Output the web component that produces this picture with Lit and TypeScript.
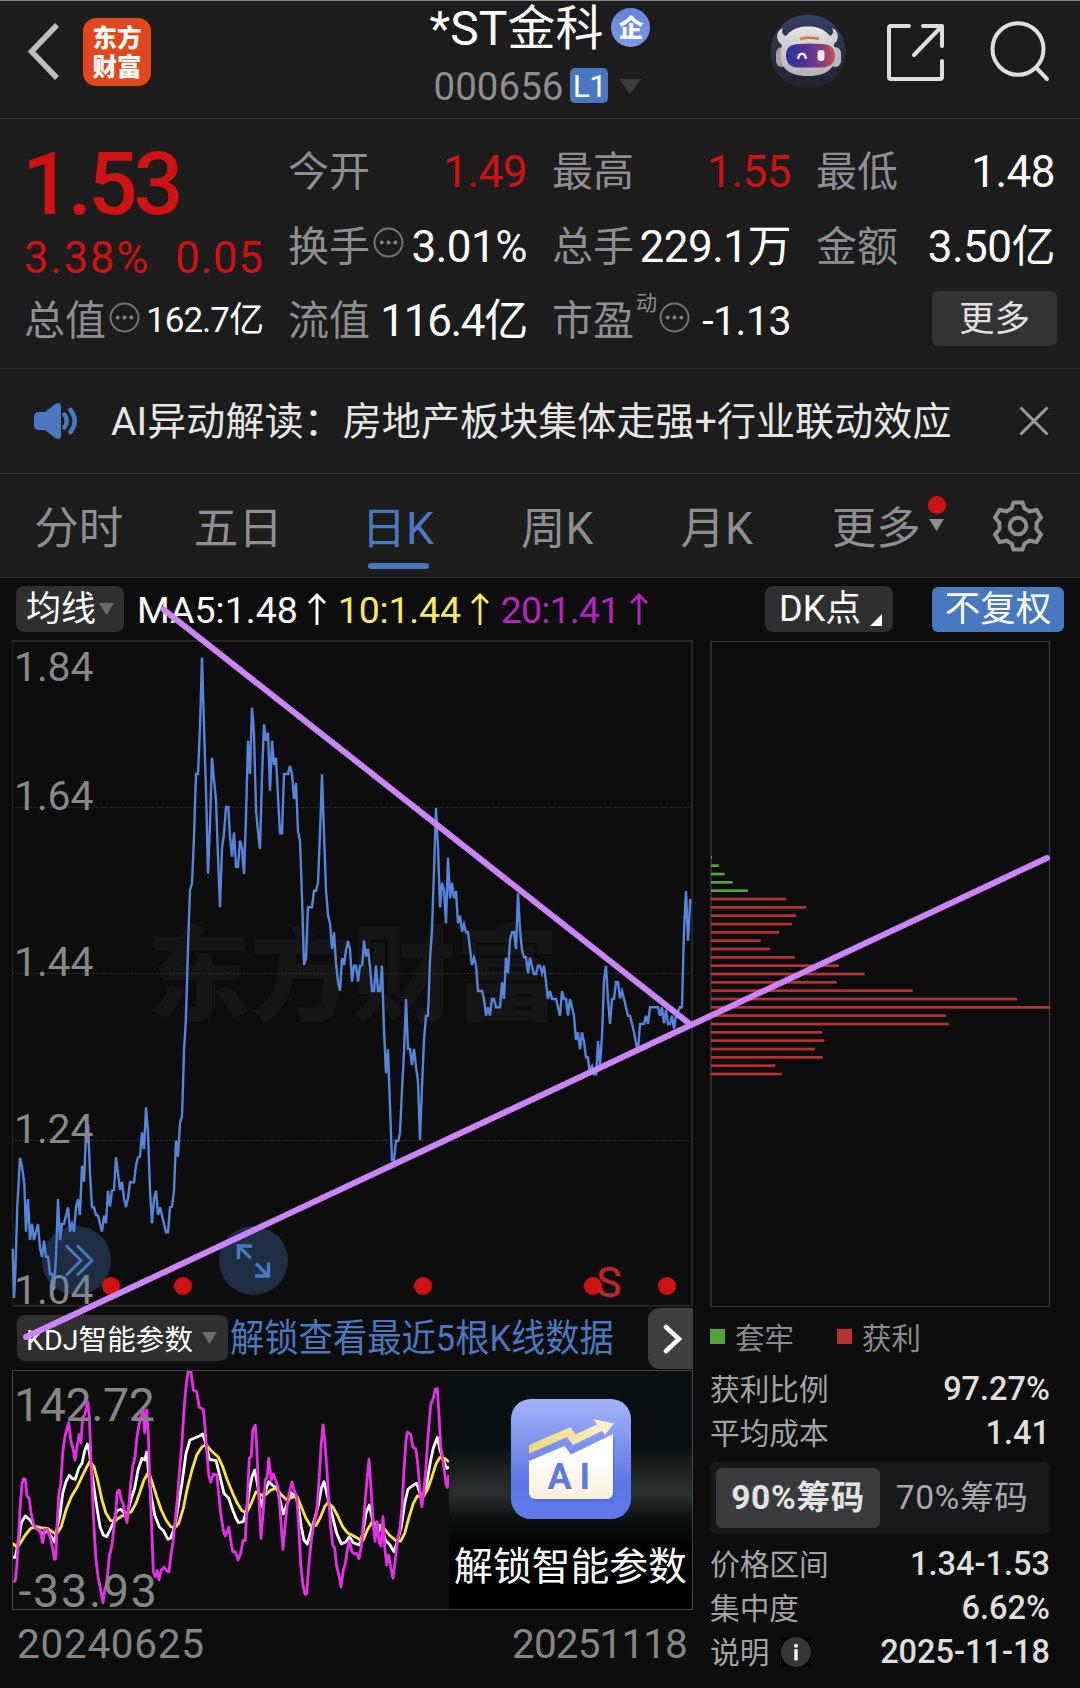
import { LitElement, html, svg, css } from "lit";
import { customElement } from "lit/decorators.js";

type Pt = [number, number];

/** Reads "x,y x,y ..." in thirds of a pixel, shifted by (ox, oy), into pixel points. */
const trace = (ox: number, oy: number, raw: string): Pt[] =>
  raw
    .trim()
    .split(/\s+/)
    .map((p) => p.split(",").map(Number))
    .map(([x, y]) => [(x + ox) / 3, (y + oy) / 3] as Pt);

const toPoints = (pts: Pt[]) => pts.map(([x, y]) => `${x.toFixed(1)},${y.toFixed(1)}`).join(" ");

/* Main chart, origin at page y = 641 */
const PRICE = toPoints([
  ...trace(0, 1017, `38,806 42,955 46,880 52,680 60,533 66,560 73,610 78,755 84,657 90,780 96,732 102,780 108,755 114,732
    120,805 126,830 132,782 138,830 144,830 150,882 157,882 162,930 168,830 174,657 180,780 186,732 192,732 204,682
    210,755 216,732 222,755 228,682 234,657 240,705 246,557 252,605 258,460 264,432 270,580 276,682 282,682 288,705
    294,707 306,755 312,707 318,730 324,632 330,680 336,632 342,630 348,532 354,580 360,630 366,607 372,655 378,682
    384,655 390,607 402,607 408,557 414,532 420,530 426,457 432,507 438,382 444,457 450,632 456,730 462,657 468,632
    474,705 480,682 498,757 504,757 510,682 516,680 522,632 528,482 534,530 540,430 546,408 549,320 552,210 557,130`),
  ...trace(0, -33, `561,1060 564,950 570,780 576,760 582,620 588,432 594,432 600,290 606,83 612,290 618,480 624,732
    630,580 636,383 642,450 648,510 654,680 660,832 666,655 672,610 678,531 685,531 690,620 696,680 702,607 708,710
    714,710 720,632 726,655 732,732 738,560 744,332 750,432 756,233 762,310 768,540 774,605 780,657 786,440 792,283
    798,332 804,308 810,482 816,332 822,405 828,383 834,500 840,610 846,610 852,432 864,432 870,408 876,432 882,507
    888,458 894,605 900,632 906,800 912,1005 918,985 924,832 936,832 942,782 948,782 954,758 960,610 966,433 972,610
    978,780 984,855 990,880 996,957 1002,907 1008,1000 1014,1055 1020,1082 1026,985 1032,1005 1038,960 1044,933`),
  ...trace(1050, -33, `0,957 6,1055 12,1007 18,1007 24,1055 30,1007 37,1005 42,932 48,980 54,957 60,1010 66,1083
    72,1083 78,1007 84,1083 90,1083 96,1007 102,1200 108,1330 114,1258 120,1430 126,1590 132,1590 138,1532 145,1532
    150,1508 156,1380 162,1270 168,1107 174,1257 180,1257 186,1305 192,1257 198,1310 204,1355 210,1530 216,1370
    222,1230 228,1157 234,1157 240,990 246,900 252,720 258,533 264,650 270,832 276,758 282,780 288,880 294,683
    300,805 306,758 312,805 318,783 324,880 330,857 336,905 342,883 348,907 354,907 360,957 366,1005 372,983
    378,1005 384,1083 396,1083 402,1107 408,1157 414,1132 420,1157 426,1107 432,1107 438,1132 450,1132 456,1057
    462,1107 468,983 474,1030 480,930 486,907 492,907 498,957 504,790 510,900 516,960 522,982 528,982 534,1030
    540,983 546,1010 552,1032 558,1032 564,1007 570,1007 576,1030 582,1007 588,1057 594,1107 600,1083 606,1107
    618,1107 624,1132 630,1157 636,1083 642,1107 648,1107 654,1157 660,1107 666,1132 672,1157 678,1230 684,1207
    690,1257 696,1207 702,1235 708,1282 714,1282 718,1320 726,1308 732,1333 739,1333 744,1233 750,1305 756,1220
    762,1050 768,1007 774,1107 780,1182 786,1107 792,1107 798,1057 804,1057 810,1105 816,1083 822,1107 834,1157
    840,1157 852,1207 860,1250 865,1250 870,1182 882,1182 888,1157 894,1182 900,1132 924,1132 930,1157 936,1132
    942,1180 948,1140 954,1182 960,1182 966,1157 972,1197 978,1157 990,1132 996,1132 1002,900 1008,783 1014,932
    1021,807`),
]);

/* KDJ chart, origin at page y = 1370 */
const kdj = (raw: string) => toPoints(trace(0, -30, raw));
const KDJ_J = kdj(`38,665 46,662 50,620 55,540 60,450 66,372 70,357 76,358 81,408 88,416 93,460 100,490 108,506 120,510
  128,548 134,508 142,508 150,530 158,565 163,598 167,596 171,500 177,395 182,375 188,280 195,228 200,210 206,188
  212,240 220,270 225,300 231,262 237,224 243,248 248,170 254,165 258,150 263,125 268,170 273,300 278,420 283,520
  288,600 295,655 302,690 309,728 314,690 320,670 328,590 335,560 340,520 346,470 352,395 358,390 363,418 369,430
  375,462 381,488 386,440 392,370 398,320 405,290 411,230 418,190 424,165 430,150 434,218 440,150 445,220 450,380
  455,500 460,635 466,650 472,632 477,660 484,630 492,622 500,632 507,636 512,590 520,540 526,480 532,420 538,340
  545,260 552,150 558,80 564,36 573,34 580,90 590,95 598,142 610,148 615,200 620,270 626,345 632,367 640,342 650,345
  656,400 662,460 670,510 676,528 686,502 692,540 698,575 706,575 714,600 722,580 729,542 736,542 742,420 748,295
  754,290 758,210 766,196 770,260 776,400 783,535 790,450 796,360 802,350 806,295 814,360 820,342 826,358 834,380
  841,460 849,568 856,490 864,415 870,390 876,366 882,390 890,410 896,500 902,610 908,670 915,703 920,702 926,620
  934,540 942,490 950,460 958,350 964,250 969,195 974,240 980,320 986,420 992,500 998,555 1004,565 1010,620 1018,650
  1023,680 1030,630 1036,612 1042,570 1048,542 1056,575 1064,582 1070,580 1077,596 1084,560 1090,490 1096,420
  1102,350 1107,298 1112,370 1118,470 1125,543 1131,485 1137,545 1143,558 1149,470 1154,560 1160,615 1166,585
  1172,620 1179,655 1186,600 1192,545 1200,505 1206,440 1212,330 1218,240 1222,216 1232,224 1238,260 1248,268
  1254,320 1260,390 1265,440 1272,390 1278,320 1285,220 1292,135 1300,115 1306,88 1312,86 1316,150 1322,260
  1330,310 1338,370 1342,382 1346,345`);
const KDJ_K = kdj(`38,592 46,592 56,540 64,488 76,468 90,480 104,500 116,510 128,522 142,510 152,528 164,546 172,500
  180,465 188,400 198,365 208,346 216,355 226,358 236,325 246,310 254,272 262,252 268,275 276,340 284,400 292,450
  300,500 310,525 320,530 330,510 342,485 350,452 362,448 372,458 382,462 392,420 404,385 414,330 426,295 434,300
  440,276 446,340 454,410 464,465 478,500 490,512 504,538 512,534 524,500 534,440 546,370 558,280 570,240 582,235
  598,228 608,222 616,245 628,298 648,302 660,350 672,400 686,415 698,450 708,475 716,488 730,485 740,450 748,390
  756,350 764,330 772,370 780,420 786,440 792,405 806,365 820,378 832,385 842,430 850,462 860,435 874,398 888,410
  896,445 904,500 912,540 922,552 934,510 946,470 956,430 964,385 972,365 980,400 990,440 1000,480 1010,520
  1024,552 1038,545 1048,530 1060,548 1078,555 1088,520 1098,460 1108,435 1118,480 1130,520 1145,500 1156,540
  1170,555 1182,575 1192,545 1204,500 1214,430 1224,388 1236,378 1250,370 1260,400 1270,405 1280,370 1292,300
  1300,265 1312,232 1320,270 1330,300 1340,325 1347,322`);
const KDJ_D = kdj(`38,550 52,562 64,545 76,525 92,505 110,500 128,504 144,506 156,515 170,522 184,500 198,450 214,410
  232,380 246,350 258,325 270,303 282,320 294,365 306,420 318,460 332,482 346,482 362,470 380,462 394,455 408,430
  420,395 432,360 446,336 456,365 470,410 484,450 498,480 512,500 524,503 536,490 550,445 562,385 576,330 590,285
  606,260 618,254 634,272 654,290 668,320 682,360 698,400 712,430 726,452 740,458 754,430 768,395 782,405 796,405
  812,390 828,385 842,402 858,418 876,412 892,410 904,440 918,475 932,498 948,496 960,475 974,440 984,428 998,440
  1012,465 1028,500 1042,518 1060,527 1078,538 1090,540 1102,510 1116,487 1130,492 1150,502 1168,525 1188,542
  1202,543 1214,520 1226,475 1240,430 1252,408 1270,410 1284,385 1296,350 1308,312 1320,292 1334,295 1347,306`);

/* Chip distribution: bar lengths in px, the first LOSS_BARS are held at a loss */
const CHIPS = [
  1, 7.7, 13.7, 21.7, 37, 75.3, 95, 85, 81, 68, 49.7, 59, 83.7, 127.7, 153.7, 125.7, 201.7, 306, 339, 235, 237.7, 111,
  113.3, 103.7, 111.7, 64.3, 70.7,
];
const LOSS_BARS = 5;

const base = css`
  :host {
    display: block;
    font-family: Roboto, "Noto Sans CJK SC", sans-serif;
    white-space: nowrap;
  }
  * {
    box-sizing: border-box;
  }
  svg {
    display: block;
    flex: none;
  }
`;

const hint = html`<svg class="hint" width="31" height="31" viewBox="0 0 31 31">
  <circle cx="15.5" cy="15.5" r="14" fill="none" stroke="#737373" stroke-width="2"></circle>
  <g fill="#858585"><circle cx="8.7" cy="15.5" r="1.9"></circle><circle cx="15.5" cy="15.5" r="1.9"></circle><circle cx="22.3" cy="15.5" r="1.9"></circle></g>
</svg>`;

const caret = (color: string) =>
  html`<svg class="caret" width="15" height="12" viewBox="0 0 15 12"><path d="M0 0H15L7.5 12Z" fill=${color}></path></svg>`;

@customElement("stock-header")
class StockHeader extends LitElement {
  static styles = [
    base,
    css`
      .bar {
        display: grid;
        grid-template-columns: 330px 420px 330px;
        height: 119px;
        border-top: 1px solid #858585;
        border-bottom: 1px solid #343434;
        background: #1c1c1c;
      }
      .left {
        display: flex;
        align-items: flex-start;
        gap: 24px;
        padding: 17px 0 0 27px;
      }
      .back {
        margin-top: 5px;
      }
      .logo {
        width: 68px;
        height: 68px;
        border-radius: 13px;
        background: #e2461c;
        color: #fff;
        font: 900 24.5px/29px "Noto Sans CJK SC", sans-serif;
        text-align: center;
        padding-top: 4px;
      }
      .mid {
        display: flex;
        flex-direction: column;
        align-items: center;
      }
      .name {
        display: flex;
        align-items: center;
        gap: 8px;
        height: 55px;
        color: #fff;
        font-size: 48px;
        line-height: 55px;
      }
      .ent {
        width: 39px;
        height: 39px;
        margin-top: -2px;
        border-radius: 50%;
        background: linear-gradient(#6383de, #7c9ae8);
        font: 900 25px/37px "Noto Sans CJK SC", sans-serif;
        text-align: center;
      }
      .code {
        display: flex;
        align-items: center;
        height: 60px;
        margin-left: -5px;
        color: #8e8d92;
        font-size: 38.5px;
      }
      .lv {
        width: 38px;
        height: 35px;
        margin: -1px 11px 0 7px;
        border-radius: 5px;
        background: #4878bf;
        color: #fff;
        font-size: 32px;
        line-height: 36px;
        text-align: center;
        letter-spacing: -1px;
      }
      .right {
        display: flex;
        align-items: flex-start;
        padding: 13px 0 0 20px;
      }
      .share {
        margin: 8px 0 0 40px;
      }
      .search {
        margin: 6px 0 0 43px;
      }
    `,
  ];
  render() {
    return html`<div class="bar">
      <div class="left">
        <svg class="back" width="32" height="58" viewBox="0 0 32 58"><path d="M30 2L4.500 28.500L30 55" fill="none" stroke="#bdbdbd" stroke-width="5.500"></path></svg>
        <div class="logo"><div>东方</div><div>财富</div></div>
      </div>
      <div class="mid">
        <div class="name"><span>*ST金科</span><span class="ent">企</span></div>
        <div class="code"><span>000656</span><span class="lv">L1</span>
          <svg width="22" height="15" viewBox="0 0 22 15"><path d="M0 0H22L11 15Z" fill="#3b3b3b"></path></svg>
        </div>
      </div>
      <div class="right">
        <svg width="76" height="76" viewBox="0 0 76 76">
          <defs>
            <linearGradient id="sky" x2="0" y2="1"><stop offset="0" stop-color="#33405f"></stop><stop offset="1" stop-color="#1e2028"></stop></linearGradient>
            <linearGradient id="visor"><stop offset="0" stop-color="#28309c"></stop><stop offset=".45" stop-color="#5a3494"></stop><stop offset=".8" stop-color="#94406e"></stop><stop offset="1" stop-color="#c25a50"></stop></linearGradient>
            <linearGradient id="shell" x2="0" y2="1"><stop offset="0" stop-color="#e6e4e6"></stop><stop offset="1" stop-color="#b3b0b7"></stop></linearGradient>
          </defs>
          <circle cx="38" cy="38" r="37.500" fill="url(#sky)"></circle>
          <path d="M13 14C5 17 5 28 14 32L23 21C15 24 10 20 13 14ZM62 14C70 17 70 28 61 32L53 21C61 24 65 20 62 14Z" fill="#d0cfd5"></path>
          <rect x="6" y="33" width="12" height="20" rx="6" fill="#a19fa8"></rect>
          <rect x="59" y="33" width="12" height="20" rx="6" fill="#bcbac0"></rect>
          <path d="M38 12.500C54 12.500 62 20 65 36C67 52 60 62 38 62C16 62 9 52 11 36C14 20 22 12.500 38 12.500Z" fill="url(#shell)"></path>
          <path d="M30 25Q39 22.500 49 25" fill="none" stroke="#c9823f" stroke-width="2.600"></path>
          <path d="M29 30Q39 29 52 30C61 30 65 34 65 42C65 50 60 53 52 53.500H28C20 53 16 49 16 41C16 34 20 30.500 29 30Z" fill="url(#visor)"></path>
          <path d="M28 45C29 38 35 38 36 45" fill="none" stroke="#efe9ff" stroke-width="2.400"></path>
          <rect x="47.500" y="36" width="7" height="11" rx="3" fill="#efe9f6"></rect>
        </svg>
        <svg class="share" width="59" height="60" viewBox="0 0 59 60" fill="none" stroke="#dedede" stroke-width="4" stroke-linecap="round" stroke-linejoin="round">
          <path d="M23 4H5Q3 4 3 6V55Q3 57 5 57H54Q56 57 56 55V39M37 4H56V24M55 5L28 33"></path>
        </svg>
        <svg class="search" width="62" height="64" viewBox="0 0 62 64" fill="none" stroke="#dedede" stroke-width="4" stroke-linecap="round">
          <ellipse cx="30" cy="29" rx="25.500" ry="25.800"></ellipse><path d="M48.500 48L59 59"></path>
        </svg>
      </div>
    </div>`;
  }
}

@customElement("stock-quote")
class StockQuote extends LitElement {
  static styles = [
    base,
    css`
      .grid {
        display: grid;
        grid-template-columns: repeat(4, 237px);
        grid-template-rows: 75px 75px 74px;
        column-gap: 27px;
        height: 250px;
        padding: 15px 0 0 26px;
        border-bottom: 1px solid #2b2b2b;
        background: #1c1c1c;
      }
      .lead {
        grid-row: span 2;
        color: #cf1111;
      }
      .price {
        height: 101px;
        margin-left: -4px;
        font-size: 87.5px;
        line-height: 101px;
        font-weight: 500;
        letter-spacing: -4px;
      }
      .change {
        display: flex;
        justify-content: space-between;
        margin: 0 -1px 0 -2px;
        font-size: 43.5px;
        line-height: 48px;
        letter-spacing: 1px;
      }
      .pct {
        letter-spacing: 1.9px;
      }
      .cell {
        display: flex;
        align-items: center;
        line-height: 60px;
      }
      .label {
        margin: 0 0 0 -2px;
        color: #8e8d92;
        font-size: 41px;
      }
      .value {
        margin-left: auto;
        color: #fff;
        font-size: 44px;
        letter-spacing: -0.5px;
      }
      .value.up {
        color: #cf1111;
      }
      .value.tight {
        letter-spacing: -1.3px;
      }
      .value.small {
        font-size: 35px;
        letter-spacing: -1px;
      }
      .value.mid {
        font-size: 41px;
      }
      .hint {
        margin: -8px 0 0 3px;
      }
      .sup {
        align-self: flex-start;
        margin: 6px -9px 0 2px;
        color: #8e8d92;
        font-size: 21px;
        line-height: 26px;
      }
      .sup + .hint {
        margin-left: 11px;
      }
      .more {
        width: 125px;
        height: 55px;
        margin: -5px -2px 0 auto;
        border-radius: 6px;
        background: #333;
        color: #e0e0e0;
        font-size: 35.5px;
        line-height: 56px;
        text-align: center;
      }
    `,
  ];
  render() {
    return html`<div class="grid">
      <div class="lead">
        <div class="price">1.53</div>
        <div class="change"><span class="pct">3.38%</span><span>0.05</span></div>
      </div>
      <div class="cell"><span class="label">今开</span><span class="value up">1.49</span></div>
      <div class="cell"><span class="label">最高</span><span class="value up">1.55</span></div>
      <div class="cell"><span class="label">最低</span><span class="value">1.48</span></div>
      <div class="cell"><span class="label">换手</span>${hint}<span class="value">3.01%</span></div>
      <div class="cell"><span class="label">总手</span><span class="value">229.1万</span></div>
      <div class="cell"><span class="label">金额</span><span class="value">3.50亿</span></div>
      <div class="cell"><span class="label">总值</span>${hint}<span class="value small">162.7亿</span></div>
      <div class="cell"><span class="label">流值</span><span class="value tight">116.4亿</span></div>
      <div class="cell"><span class="label">市盈</span><span class="sup">动</span>${hint}<span class="value mid">-1.13</span></div>
      <div class="cell"><span class="more">更多</span></div>
    </div>`;
  }
}

@customElement("stock-notice")
class StockNotice extends LitElement {
  static styles = [
    base,
    css`
      .bar {
        display: flex;
        align-items: center;
        height: 105px;
        padding: 0 31px 0 33px;
        border-bottom: 1px solid #333;
        background: #1c1c1c;
        color: #e6e6e6;
      }
      .text {
        margin: 2px 0 0 32px;
        font-size: 39px;
        line-height: 60px;
        letter-spacing: 0.1px;
      }
      .close {
        margin-left: auto;
      }
    `,
  ];
  render() {
    return html`<div class="bar">
      <svg width="46" height="38" viewBox="0 0 46 38">
        <path d="M6 10H12L22 2Q28 -1 28 5V33Q28 39 22 36L12 28H6Q1 28 1 23V15Q1 10 6 10Z" fill="#4878bf"></path>
        <path d="M31.500 12.500Q36 19 31.500 25.500M37.500 8Q46 19 37.500 30" fill="none" stroke="#4878bf" stroke-width="4.500" stroke-linecap="round"></path>
      </svg>
      <span class="text">AI异动解读：房地产板块集体走强+行业联动效应</span>
      <svg class="close" width="30" height="30" viewBox="0 0 30 30"><path d="M1.500 1.500L28.500 28.500M28.500 1.500L1.500 28.500" stroke="#9c9c9c" stroke-width="3"></path></svg>
    </div>`;
  }
}

@customElement("period-tabs")
class PeriodTabs extends LitElement {
  static styles = [
    base,
    css`
      .bar {
        display: grid;
        grid-template-columns: repeat(6, 159.5px) 122px;
        grid-template-rows: 103px;
        height: 104px;
        border-bottom: 1px solid #343434;
        background: #1c1c1c;
        color: #8e8d92;
        font-size: 44.5px;
        line-height: 110px;
        text-align: center;
      }
      .tab {
        position: relative;
        height: 103px;
        padding-right: 2px;
      }
      .active {
        color: #4878bf;
      }
      .active::after {
        content: "";
        position: absolute;
        left: 49px;
        bottom: 8px;
        width: 61px;
        height: 6px;
        border-radius: 3px;
        background: #4878bf;
      }
      .caret {
        position: absolute;
        left: 131.5px;
        top: 45px;
      }
      .dot {
        position: absolute;
        left: 130px;
        top: 22px;
        width: 18px;
        height: 18px;
        border-radius: 50%;
        background: #cf1111;
      }
      .gear {
        margin: 25px 0 0 35px;
      }
    `,
  ];
  render() {
    return html`<div class="bar">
      <span class="tab">分时</span><span class="tab">五日</span><span class="tab active">日K</span>
      <span class="tab">周K</span><span class="tab">月K</span>
      <span class="tab">更多${caret("#8e8d92")}<i class="dot"></i></span>
      <svg class="gear" width="52" height="54" viewBox="-26 -27 52 54" fill="none" stroke="#8e8d92" stroke-width="4">
        <path d="M-4.500 -23.500H4.500L6.500 -17.500L11.500 -14.700L18.500 -16L23 -8.500L18.500 -3V3L23 8.500L18.500 16L11.500 14.700L6.500 17.500L4.500 23.500H-4.500L-6.500 17.500L-11.500 14.700L-18.500 16L-23 8.500L-18.500 3V-3L-23 -8.500L-18.500 -16L-11.500 -14.700L-6.500 -17.500Z"></path>
        <circle r="8.300"></circle>
      </svg>
    </div>`;
  }
}

@customElement("ma-toolbar")
class MaToolbar extends LitElement {
  static styles = [
    base,
    css`
      .bar {
        display: flex;
        align-items: center;
        height: 63px;
        padding: 0 16px 1px;
        font-size: 37.5px;
        line-height: 49px;
      }
      .btn {
        display: flex;
        align-items: center;
        height: 46px;
        border-radius: 8px;
        background: #2f2f2f;
        color: #fff;
        font-size: 35px;
      }
      .kind {
        width: 108px;
        gap: 3px;
        padding-left: 10px;
      }
      .ma {
        display: flex;
        align-items: center;
        gap: 10px;
        margin-left: 12px;
      }
      .ma > span {
        margin-top: 2px;
      }
      .ma5 {
        margin-left: 13px;
        color: #fff;
        letter-spacing: 0;
      }
      .ma10 {
        color: #fbe960;
        letter-spacing: -0.2px;
      }
      .ma20 {
        color: #b623c0;
        letter-spacing: -0.8px;
      }
      .dk {
        width: 128px;
        margin-left: auto;
        padding-left: 14px;
        font-size: 36px;
        gap: 9px;
      }
      .dk svg {
        margin-top: 22px;
      }
      .adj {
        width: 132px;
        height: 45px;
        margin-left: 39px;
        justify-content: center;
        border-radius: 6px;
        background: #4878bf;
        font-size: 35.5px;
      }
    `,
  ];
  private arrow = html`<svg width="18" height="32" viewBox="0 0 18 32" fill="none" stroke="currentColor" stroke-width="2.800"><path d="M9 32V2M1 10L9 2L17 10"></path></svg>`;
  render() {
    return html`<div class="bar">
      <span class="btn kind">均线${caret("#6b6b6b")}</span>
      <span class="ma ma5"><span>MA5:1.48</span>${this.arrow}</span>
      <span class="ma ma10"><span>10:1.44</span>${this.arrow}</span>
      <span class="ma ma20"><span>20:1.41</span>${this.arrow}</span>
      <span class="btn dk">DK点<svg width="12" height="12" viewBox="0 0 12 12"><path d="M12 0V12H0Z" fill="#fff"></path></svg></span>
      <span class="btn adj">不复权</span>
    </div>`;
  }
}

@customElement("price-chart")
class PriceChart extends LitElement {
  static styles = [
    base,
    css`
      svg {
        overflow: visible;
      }
      .mark {
        font: 900 104px "Noto Sans CJK SC", sans-serif;
        fill: #151515;
      }
      .axis {
        font-size: 41px;
        fill: #888;
      }
      .signal {
        font-size: 42px;
        fill: #b92525;
      }
    `,
  ];
  render() {
    const labels: [string, number][] = [["1.84", 39.5], ["1.64", 168.5], ["1.44", 334.5], ["1.24", 501.5], ["1.04", 663]];
    return html`<svg width="693" height="667" viewBox="0 0 693 667">
      <text class="mark" x="147" y="372" textLength="412">东方财富</text>
      <g stroke="#2c2c2c" stroke-dasharray="2 1.500">
        <path d="M12 166.500H692M12 332.500H692M12 499.500H692"></path>
      </g>
      <path d="M12.500 0V665" stroke="#242424"></path>
      <path d="M12 0H692V664.800H12" fill="none" stroke="#242424" stroke-width="2"></path>
      <polyline points=${PRICE} fill="none" stroke="#5585db" stroke-width="2.400"></polyline>
      ${labels.map(([t, y]) => svg`<text class="axis" x="14" y=${y} textLength="79.500">${t}</text>`)}
      <g fill="#4878bf" fill-opacity=".3"><circle cx="76.500" cy="619.500" r="34.500"></circle><circle cx="253.500" cy="619.500" r="34.500"></circle></g>
      <g fill="none" stroke="#4878bf" stroke-width="2.800">
        <path d="M66 604.500L81 619.500L66 634.500M77 604.500L92 619.500L77 634.500"></path>
        <path d="M238.500 618V605H252M238.500 605L250.500 617" stroke-width="3.500"></path>
        <path d="M268.500 621.500V635H255M268.500 635L256 622.500" stroke-width="3.500"></path>
      </g>
      <g fill="#cf1111">${[111, 183, 423, 593, 667].map((x) => svg`<circle cx=${x} cy="645" r="9"></circle>`)}</g>
      <text class="signal" x="596.500" y="655.500" stroke="#b92525" stroke-width=".6">S</text>
    </svg>`;
  }
}

@customElement("kdj-panel")
class KdjPanel extends LitElement {
  static styles = [
    base,
    css`
      .head {
        display: flex;
        align-items: center;
        height: 61px;
        padding-left: 17px;
        color: #fff;
      }
      .param {
        display: flex;
        align-items: center;
        gap: 9px;
        width: 211px;
        height: 46px;
        margin-bottom: 2px;
        padding-left: 9px;
        border-radius: 8px;
        background: #2f2f2f;
        font-size: 28.5px;
        letter-spacing: 0.1px;
      }
      .unlock {
        width: 418px;
        margin: -2px -33px 0 2px;
        color: #4878bf;
        font-size: 37.5px;
        line-height: 50px;
        transform: scaleX(0.915);
        transform-origin: left;
      }
      .next {
        display: flex;
        align-items: center;
        width: 45px;
        height: 61px;
        margin-left: auto;
        padding-left: 15px;
        border-radius: 12px 0 0 12px;
        background: #3e3e3e;
      }
      .body {
        display: flex;
        width: 681px;
        height: 240px;
        margin: 1px 0 0 12px;
        border: 1px solid #444;
      }
      .axis {
        font-size: 46.5px;
        fill: #858585;
      }
      .promo {
        display: flex;
        flex-direction: column;
        align-items: center;
        flex: 1;
        padding-top: 28px;
        background: linear-gradient(#081112 0%, #081112 32%, #252929 47%, #2a2d2d 52%, #0b1010 62%, #020303 74%, #000 100%);
        color: #fff;
        font-size: 38.8px;
        line-height: 96px;
      }
      .ai {
        font: 700 36px Roboto, sans-serif;
        fill: #5b79e6;
      }
      .dates {
        display: flex;
        justify-content: space-between;
        padding: 10px 6px 0 17px;
        color: #858585;
        font-size: 40.5px;
        line-height: 48px;
      }
      .from {
        letter-spacing: 0.7px;
      }
      .to {
        letter-spacing: -0.9px;
      }
    `,
  ];
  render() {
    return html`<div class="head">
        <span class="param">KDJ智能参数${caret("#6b6b6b")}</span>
        <span class="unlock">解锁查看最近5根K线数据</span>
        <span class="next"><svg width="20" height="30" viewBox="0 0 20 30"><path d="M3 3L16 15L3 27" fill="none" stroke="#fff" stroke-width="4.500" stroke-linecap="round"></path></svg></span>
      </div>
      <div class="body">
        <svg width="436" height="238" viewBox="13 1 436 238">
          <g fill="none" stroke-width="2.800" stroke-linejoin="round">
            <polyline points=${KDJ_K} stroke="#fff"></polyline>
            <polyline points=${KDJ_D} stroke="#fbe345"></polyline>
            <polyline points=${KDJ_J} stroke="#e62fe6"></polyline>
          </g>
          <text class="axis" x="14" y="51" textLength="141">142.72</text>
          <text class="axis" x="18.500" y="237" textLength="138.500">-33.93</text>
        </svg>
        <div class="promo">
          <svg width="120" height="120" viewBox="0 0 120 120">
            <defs>
              <linearGradient id="card" x2="0" y2="1"><stop offset="0" stop-color="#a3b4f9"></stop><stop offset=".7" stop-color="#5d76e6"></stop><stop offset="1" stop-color="#6079ea"></stop></linearGradient>
              <linearGradient id="page" x2="0" y2="1"><stop offset=".4" stop-color="#fff"></stop><stop offset="1" stop-color="#faefd8"></stop></linearGradient>
              <linearGradient id="gold"><stop offset="0" stop-color="#f2d778"></stop><stop offset="1" stop-color="#fdf3d4"></stop></linearGradient>
            </defs>
            <rect width="120" height="120" rx="20" fill="url(#card)"></rect>
            <path d="M18 62L53.500 47L60 55.500L102 35V93Q102 100 95 100H25Q18 100 18 93Z" fill="#4f68d8" opacity=".5" transform="translate(2 3)"></path>
            <path d="M18 62L53.500 47L60 55.500L102 35V93Q102 100 95 100H25Q18 100 18 93Z" fill="url(#page)"></path>
            <path d="M18 46L59.500 28L64.500 35.500L86 25.500L82.500 20L103 24.500L94 36L91 32L62 46L56 38L18 54.500Z" fill="url(#gold)"></path>
            <text class="ai" x="36.500" y="90">A</text><text class="ai" x="68.500" y="90">I</text>
          </svg>
          <span>解锁智能参数</span>
        </div>
      </div>
      <div class="dates"><span class="from">20240625</span><span class="to">20251118</span></div>`;
  }
}

@customElement("chip-panel")
class ChipPanel extends LitElement {
  static styles = [
    base,
    css`
      .legend {
        display: flex;
        align-items: center;
        height: 58px;
        margin-top: -2px;
        color: #8a8a8e;
        font-size: 29.5px;
      }
      .sq {
        width: 15px;
        height: 15px;
        margin-right: 10px;
        background: #55a438;
      }
      .sq.win {
        margin-left: 43px;
        background: #b73333;
      }
      .row {
        display: flex;
        align-items: center;
        height: 44px;
        color: #a3a3a5;
        font-size: 29.7px;
      }
      .num {
        margin-left: auto;
        padding-top: 4px;
        color: #dedede;
        font-size: 32.5px;
        font-weight: 500;
      }
      .switch {
        display: flex;
        align-items: center;
        height: 72px;
        margin: 9px 0 6px;
        padding: 6px;
        border-radius: 6px;
        background: #18181a;
        color: #a8a8aa;
        font-size: 33.5px;
      }
      .opt {
        flex: 1;
        height: 60px;
        border-radius: 6px;
        line-height: 60px;
        text-align: center;
        letter-spacing: 0.7px;
      }
      .on {
        background: #3a3a3c;
        color: #e3e3e3;
        font-weight: 700;
      }
      .info {
        margin: 3px 0 0 12px;
        background: #000;
      }
    `,
  ];
  render() {
    return html`<svg width="341" height="668" viewBox="0 0 341 668">
        <path d="M0 .500H340M0 665.500H340" stroke="#363636"></path>
        <path d="M1 0V666M339.500 0V666" stroke="#363636" stroke-width="1.500"></path>
        ${CHIPS.map(
          (w, i) => svg`<rect x="1" y=${(215 + i * 8.333).toFixed(1)} width=${w} height="2.700" fill=${i < LOSS_BARS ? "#55a438" : "#b73333"}></rect>`
        )}
      </svg>
      <div class="legend"><i class="sq"></i>套牢<i class="sq win"></i>获利</div>
      <div class="row">获利比例<span class="num">97.27%</span></div>
      <div class="row">平均成本<span class="num">1.41</span></div>
      <div class="switch"><span class="opt on">90%筹码</span><span class="opt">70%筹码</span></div>
      <div class="row">价格区间<span class="num">1.34-1.53</span></div>
      <div class="row">集中度<span class="num">6.62%</span></div>
      <div class="row">说明<svg class="info" width="30" height="30" viewBox="0 0 30 30"><circle cx="15" cy="15" r="15" fill="#363636"></circle><circle cx="15" cy="8.700" r="2" fill="#fff"></circle><rect x="13.300" y="12" width="3.400" height="11.500" rx="1" fill="#fff"></rect></svg><span class="num">2025-11-18</span></div>`;
  }
}

@customElement("app-root")
class AppRoot extends LitElement {
  static styles = [
    base,
    css`
      .screen {
        position: relative;
        width: 1080px;
        height: 1688px;
        overflow: hidden;
        background: #0d0d0d;
      }
      .charts {
        display: grid;
        grid-template-columns: 693px 340px;
        column-gap: 17px;
      }
      .drawing {
        position: absolute;
        inset: 0;
        pointer-events: none;
      }
    `,
  ];
  render() {
    return html`<div class="screen">
      <stock-header></stock-header>
      <stock-quote></stock-quote>
      <stock-notice></stock-notice>
      <period-tabs></period-tabs>
      <ma-toolbar></ma-toolbar>
      <div class="charts">
        <div><price-chart></price-chart><kdj-panel></kdj-panel></div>
        <chip-panel></chip-panel>
      </div>
      <svg class="drawing" width="1080" height="1688" viewBox="0 0 1080 1688" fill="none" stroke="#cc84fc" stroke-width="6" stroke-linecap="round">
        <path d="M163.500 609.500L690.500 1024.500M26 1337L1047 858"></path>
      </svg>
    </div>`;
  }
}
